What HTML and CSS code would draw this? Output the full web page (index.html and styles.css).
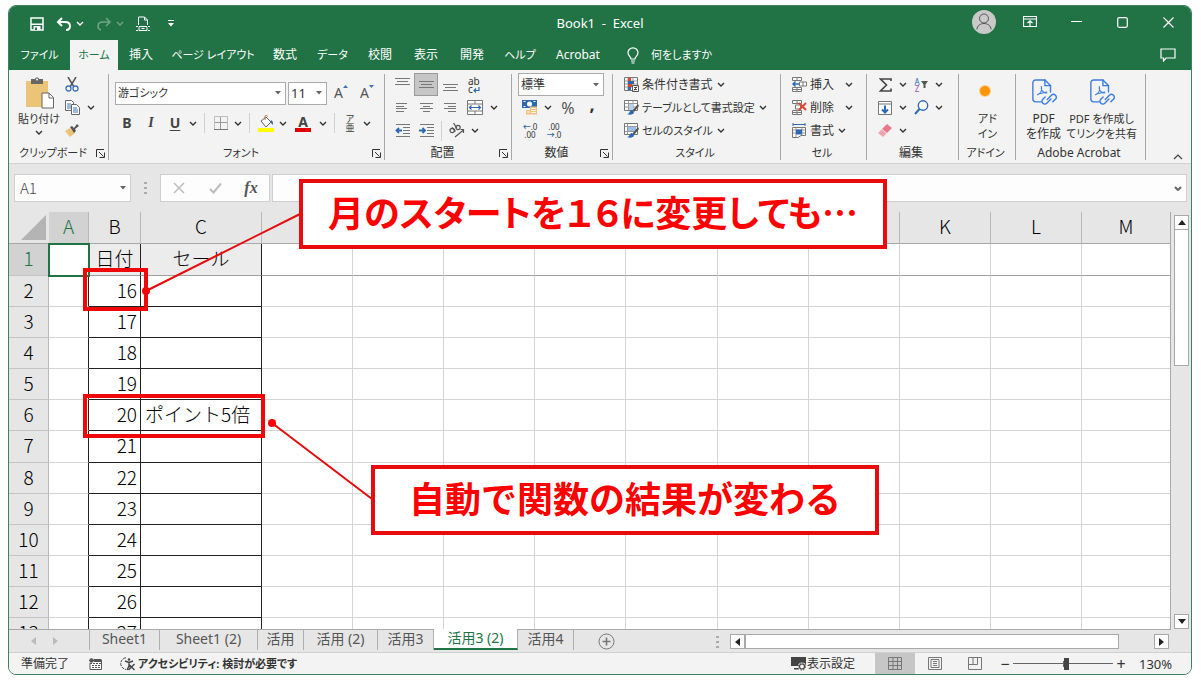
FILE: index.html
```html
<!DOCTYPE html>
<html lang="ja">
<head>
<meta charset="utf-8">
<title>Book1 - Excel</title>
<link rel="stylesheet" href="styles.css">
</head>
<body>
<svg class="defs" aria-hidden="true">
  <symbol id="chev" viewBox="0 0 8 5"><path d="M1 1l3 3 3-3" fill="none" stroke="currentColor" stroke-width="1.4"/></symbol>
  <symbol id="drop" viewBox="0 0 6 4"><path d="M0 0h6L3 3.5z" fill="currentColor"/></symbol>
  <symbol id="launch" viewBox="0 0 9 9"><path d="M.5 8V.5H8M3 3l4.5 4.500M8.500 3.500v5h-5" fill="none" stroke="currentColor"/></symbol>
  <symbol id="pdf" viewBox="0 0 28 30">
    <g fill="none" stroke="#3b7de0" stroke-width="1.5" stroke-linecap="round">
      <path d="M11 24.500H5a3 3 0 0 1-3-3V4a3 3 0 0 1 3-3h10l6 6v7"/><path d="M15 1v6h6"/>
      <path d="M7 17c4-2 5-6 4-9M11 10c1 4 3 5 6 5M8 16l9-2" stroke-width="1.200"/>
      <path d="M17.500 22l4.500-4.500a3 3 0 0 1 4.300 4.300L23.500 24.500"/><path d="M21.500 21.500L17 26a3 3 0 0 1-4.300-4.300l2.500-2.500"/>
    </g>
  </symbol>
</svg>

<div class="window">
  <header class="titlebar">
    <div class="quick">
      <button class="btn save" aria-label="上書き保存"><svg width="14" height="14" viewBox="0 0 14 14"><path d="M1 1h12v12H1z" fill="none" stroke="#fff" stroke-width="1.500"/><path d="M1 6.500h12v1.500H1zM3.500 9h7v4h-7z" fill="#fff"/><path d="M5 10.500h2V13H5z" fill="#217346"/></svg></button>
      <button class="btn" aria-label="元に戻す"><svg width="16" height="14" viewBox="0 0 16 14"><path d="M6 1L2 5l4 4M2 5h7c3 0 5 1.500 5 4s-1.500 4-4 4" fill="none" stroke="#fff" stroke-width="2"/></svg></button>
      <svg class="chev" width="8" height="5"><use href="#chev"/></svg>
      <button class="btn dim" aria-label="やり直し"><svg width="16" height="14" viewBox="0 0 16 14"><path d="M10 1l4 4-4 4M14 5H7C4 5 2 6.500 2 9s1 3.500 3 4" fill="none" stroke="#fff" stroke-width="1.500"/></svg></button>
      <svg class="chev dim" width="8" height="5"><use href="#chev"/></svg>
      <button class="btn" aria-label="印刷プレビュー"><svg width="14" height="16" viewBox="0 0 14 16"><path d="M2.500 9V1h6l3 3v5M8.500 1v3h3" fill="none" stroke="#fff"/><path d="M0 10.500h2M12 10.500h2M0 14.500h2M12 14.500h2M3 10.500h8v4H3zM5.500 12.500h3" fill="none" stroke="#fff"/></svg></button>
      <button class="btn custom" aria-label="カスタマイズ"><svg width="6" height="7" viewBox="0 0 6 7"><path d="M0 .5h6" stroke="#fff"/><path d="M0 3h6L3 6.500z" fill="#fff"/></svg></button>
    </div>
    <h1 class="doc-title">Book1  -  Excel</h1>
    <div class="win-buttons">
      <button class="btn" aria-label="アカウント"><svg width="24" height="24" viewBox="0 0 24 24"><circle cx="12" cy="12" r="12" fill="#c9c9c9"/><circle cx="12" cy="8.500" r="4.500" fill="none" stroke="#555"/><path d="M5 19.500c0-8 14-8 14 0" fill="none" stroke="#555"/></svg></button>
      <button class="btn" aria-label="リボンの表示オプション"><svg width="14" height="12" viewBox="0 0 14 12"><path d="M.5.5h13v10H.5zM.5 3h13M7 10V5M4.500 7L7 4.700 9.500 7" fill="none" stroke="#fff" stroke-width="1.200"/></svg></button>
      <button class="btn" aria-label="最小化"><svg width="11" height="11" viewBox="0 0 11 11"><path d="M0 4.500h11" stroke="#fff" stroke-width="1.200"/></svg></button>
      <button class="btn" aria-label="最大化"><svg width="11" height="11" viewBox="0 0 11 11"><rect x=".7" y=".7" width="9.600" height="9.600" rx="1.500" fill="none" stroke="#fff" stroke-width="1.200"/></svg></button>
      <button class="btn" aria-label="閉じる"><svg width="11" height="11" viewBox="0 0 11 11"><path d="M.5.5l10 10M10.500.5l-10 10" stroke="#fff" stroke-width="1.200"/></svg></button>
    </div>
  </header>

  <nav class="tabs">
    <a href="#" class="kana">ファイル</a><a href="#" class="active kana">ホーム</a><a href="#">挿入</a><a href="#" class="kana">ページ レイアウト</a><a href="#">数式</a><a href="#" class="kana">データ</a><a href="#">校閲</a><a href="#">表示</a><a href="#">開発</a><a href="#" class="kana">ヘルプ</a><a href="#">Acrobat</a>
    <a href="#" class="tell kana"><svg width="12" height="17" viewBox="0 0 12 17"><path d="M4 12C4 9.500 1 9 1 5.800a5 5 0 0 1 10 0C11 9 8 9.500 8 12zM4 14h4M4.500 16h3" fill="none" stroke="#fff" stroke-width="1.200"/></svg>何をしますか</a>
    <button class="btn comment" aria-label="コメント"><svg width="16" height="14" viewBox="0 0 16 14"><path d="M1 1h14v9H6l-2.500 3V10H1z" fill="none" stroke="#fff" stroke-width="1.200"/></svg></button>
  </nav>

  <div class="ribbon">
    <section class="group g-clip">
      <div class="group-body">
        <button class="btn big kana"><svg width="30" height="32" viewBox="0 0 30 32"><path d="M2 4h22v26H2z" fill="#ecc477"/><path d="M7 2h4c0-2 4-2 4 0h4v5H7z" fill="#666"/><circle cx="13" cy="2.500" r="1" fill="#fff"/><path d="M18 16h7l4.500 4.500V31H18z" fill="#fff" stroke="#666"/><path d="M25 16v5h4.500" fill="none" stroke="#666"/></svg><span>貼り付け</span><svg class="chev" width="8" height="5"><use href="#chev"/></svg></button>
        <div class="rows">
          <div class="row"><button class="btn c24" aria-label="切り取り"><svg width="14" height="15" viewBox="0 0 14 15"><path d="M3 0l6 10M11 0L5 10" stroke="#555" stroke-width="1.500"/><circle cx="3.500" cy="11.500" r="2.500" fill="none" stroke="#3f72b5" stroke-width="1.300"/><circle cx="10.500" cy="11.500" r="2.500" fill="none" stroke="#3f72b5" stroke-width="1.300"/></svg></button></div>
          <div class="row"><button class="btn c24" aria-label="コピー"><svg width="15" height="15" viewBox="0 0 15 15"><path d="M.5.5h6l2 2v8h-8z" fill="#fff" stroke="#666"/><path d="M2 4h4M2 6h4M2 8h4" stroke="#3f72b5"/><path d="M6.500 4.500h5l3 3v7h-8z" fill="#fff" stroke="#666"/><path d="M8 8h4M8 10h5M8 12h5" stroke="#3f72b5"/></svg></button><svg class="chev c14" width="8" height="5"><use href="#chev"/></svg></div>
          <div class="row"><button class="btn c24" aria-label="書式のコピー"><svg width="14" height="13" viewBox="0 0 14 13"><path d="M5 4l5 5-5 4-5-6z" fill="#ecc477"/><path d="M5 3l2-1 2 2 3-4 2 2-4 3 1 2-2 2z" fill="#555"/></svg></button></div>
        </div>
      </div>
      <div class="group-label kana"><span>クリップボード</span><button class="btn launch" aria-label="クリップボードの設定"><svg width="9" height="9"><use href="#launch"/></svg></button></div>
    </section>

    <section class="group g-font">
      <div class="group-body stack">
        <div class="frow">
          <label class="combo font-name kana"><select aria-label="フォント"><option>游ゴシック</option></select><svg width="6" height="4"><use href="#drop"/></svg></label>
          <label class="combo font-size"><select aria-label="フォント サイズ"><option>11</option></select><svg width="6" height="4"><use href="#drop"/></svg></label>
          <button class="btn c24 grow" aria-label="拡大">A<svg width="5" height="3" viewBox="0 0 5 3"><path d="M0 3l2.500-3L5 3z" fill="#3f72b5"/></svg></button>
          <button class="btn c24 grow" aria-label="縮小">A<svg width="5" height="3" viewBox="0 0 5 3"><path d="M0 0h5L2.500 3z" fill="#3f72b5"/></svg></button>
        </div>
        <div class="frow tight">
          <button class="btn c24 b">B</button><button class="btn c24 i">I</button><button class="btn c24 u">U</button><svg class="chev c12" width="8" height="5"><use href="#chev"/></svg>
          <i class="sep"></i>
          <button class="btn c22" aria-label="罫線"><svg width="14" height="14" viewBox="0 0 14 14"><path d="M.5.5h13v13H.5z" fill="none" stroke="#888" stroke-dasharray="1 1"/><path d="M6.500 1v12M1 6.500h12" stroke="#999"/><path d="M0 13.500h14" stroke="#777"/></svg></button><svg class="chev c12" width="8" height="5"><use href="#chev"/></svg>
          <i class="sep"></i>
          <button class="btn c22" aria-label="塗りつぶし"><svg width="17" height="17" viewBox="0 0 17 17"><path d="M3 6l5-4 5 5-5 5z" fill="#fff" stroke="#666"/><path d="M7 5V1.500c0-1.500 2.500-1.500 2.500 0" fill="none" stroke="#ba7040"/><path d="M13 5c2 1 2.500 3 1.500 5l-2-3z" fill="#2d69b3"/><path d="M0 13h16v4H0z" fill="#ffff00"/></svg></button><svg class="chev c12" width="8" height="5"><use href="#chev"/></svg>
          <button class="btn c28 fcolor" aria-label="フォントの色">A</button><svg class="chev c12" width="8" height="5"><use href="#chev"/></svg>
          <i class="sep"></i>
          <button class="btn c20 ruby"><span>ア</span><span>亜</span></button><svg class="chev c14" width="8" height="5"><use href="#chev"/></svg>
        </div>
      </div>
      <div class="group-label kana"><span>フォント</span><button class="btn launch" aria-label="フォントの設定"><svg width="9" height="9"><use href="#launch"/></svg></button></div>
    </section>

    <section class="group g-align">
      <div class="group-body">
        <div class="rows">
          <div class="row"><button class="btn c24" aria-label="上揃え"><svg width="15" height="15" viewBox="0 0 15 15"><path d="M0 1.500h15M2 4.500h11M0 7.500h15" stroke="#777"/></svg></button><button class="btn c24 on" aria-label="上下中央揃え"><svg width="15" height="9" viewBox="0 0 15 9"><path d="M0 1.500h15M2 4.500h11M0 7.500h15" stroke="#777"/></svg></button><button class="btn c24" aria-label="下揃え"><svg width="15" height="15" viewBox="0 0 15 15"><path d="M0 7.500h15M2 10.500h11M0 13.500h15" stroke="#777"/></svg></button><button class="btn c26 wrap"><span>ab</span><span>c<svg width="7" height="6" viewBox="0 0 7 6"><path d="M6 0v3.500H1M3 1.500l-2 2 2 2" fill="none" stroke="#2d69b3" stroke-width="1.200"/></svg></span></button></div>
          <div class="row"><button class="btn c24" aria-label="左揃え"><svg width="12" height="9" viewBox="0 0 12 9"><path d="M0 .5h11M0 3.500h8M0 5.500h11M0 8.500h8" stroke="#777"/></svg></button><button class="btn c24" aria-label="中央揃え"><svg width="13" height="9" viewBox="0 0 13 9"><path d="M0 .5h13M3 3.500h7M0 5.500h13M3 8.500h7" stroke="#777"/></svg></button><button class="btn c24" aria-label="右揃え"><svg width="12" height="9" viewBox="0 0 12 9"><path d="M0 .5h12M4 3.500h8M0 5.500h12M4 8.500h8" stroke="#777"/></svg></button><button class="btn c26" aria-label="セルを結合"><svg width="16" height="15" viewBox="0 0 16 15"><path d="M.5.5h15v14H.5z" fill="#fff" stroke="#777"/><path d="M1 4h14M1 11h14M8 1v3M8 11v3" stroke="#777"/><path d="M2 7.500h12M4.500 5.500l-2 2 2 2M11.500 5.500l2 2-2 2" fill="none" stroke="#2d69b3" stroke-width="1.200"/></svg></button><svg class="chev c12" width="8" height="5"><use href="#chev"/></svg></div>
          <div class="row"><button class="btn c24" aria-label="インデントを減らす"><svg width="15" height="13" viewBox="0 0 15 13"><path d="M1 .5h14M8 3.500h7M8 6.500h7M8 9.500h7M1 12.500h14" stroke="#777"/><path d="M7 6.500H1.500M4 4L1.500 6.500 4 9" fill="none" stroke="#2d69b3" stroke-width="1.800"/></svg></button><button class="btn c24" aria-label="インデントを増やす"><svg width="15" height="13" viewBox="0 0 15 13"><path d="M1 .5h14M8 3.500h7M8 6.500h7M8 9.500h7M1 12.500h14" stroke="#777"/><path d="M0 6.500h5.500M3.500 4L6 6.500 3.500 9" fill="none" stroke="#2d69b3" stroke-width="1.800"/></svg></button><i class="sep narrow"></i><button class="btn c24" aria-label="方向"><svg width="16" height="15" viewBox="0 0 16 15"><g fill="none" stroke="#555" stroke-width="1.200"><circle cx="3.200" cy="7.500" r="2.200"/><path d="M3 4.300l3.500 4.200"/><circle cx="9" cy="4.500" r="2.200"/><path d="M4.500 0l3.500 5.500M6 14l8.500-7M11.500 6.500h3V10"/></g></svg></button><svg class="chev c12" width="8" height="5"><use href="#chev"/></svg></div>
        </div>
      </div>
      <div class="group-label"><span>配置</span><button class="btn launch" aria-label="配置の設定"><svg width="9" height="9"><use href="#launch"/></svg></button></div>
    </section>

    <section class="group g-num">
      <div class="group-body">
        <div class="rows">
          <label class="combo format"><select aria-label="表示形式"><option>標準</option></select><svg width="6" height="4"><use href="#drop"/></svg></label>
          <div class="row"><button class="btn c24" aria-label="通貨"><svg width="16" height="15" viewBox="0 0 16 15"><path d="M0 0h15v8H0z" fill="#2d69b3"/><circle cx="7.500" cy="4" r="2.500" fill="#fff"/><path d="M1.500 1.500h2M11.500 1.500h2M1.500 6.500h2" stroke="#fff"/><path d="M8 6.500h7v8H8zM4 10h5v4.500H4z" fill="#f3c07c"/><path d="M9 8.500h5M9 10.500h5M9 12.500h5M5 12h3" stroke="#fff" stroke-width=".8"/></svg></button><svg class="chev c12" width="8" height="5"><use href="#chev"/></svg><button class="btn c28 pct">%</button><button class="btn c20 comma">,</button></div>
          <div class="row"><button class="btn c24 dec"><span><b>←</b>.0</span><span>.00</span></button><button class="btn c24 dec"><span>.00</span><span><b>→</b>.0</span></button></div>
        </div>
      </div>
      <div class="group-label"><span>数値</span><button class="btn launch" aria-label="数値の設定"><svg width="9" height="9"><use href="#launch"/></svg></button></div>
    </section>

    <section class="group g-style">
      <div class="group-body">
        <div class="rows">
          <button class="btn item"><svg width="15" height="15" viewBox="0 0 15 15"><path d="M.5.5h13v13H.5z" fill="#fff" stroke="#777"/><path d="M1 4h12M1 7h12M1 10h12M4 1v12M9 1v12" stroke="#999"/><path d="M4 1h3v3H4zM4 7h4v3H4z" fill="#d9482b"/><path d="M4 4h6v3H4zM4 10h3v3H4z" fill="#2d69b3"/><path d="M8.500 8.500h6v6h-6z" fill="#fff" stroke="#555"/><path d="M10 10.500h3M10 12.500h3M13 9.500l-3 4" stroke="#333" stroke-width=".8"/></svg>条件付き書式<svg class="chev" width="8" height="5"><use href="#chev"/></svg></button>
          <button class="btn item kana"><svg width="15" height="15" viewBox="0 0 15 15"><path d="M.5.5h13v10H.5z" fill="#fff" stroke="#777"/><path d="M1 3.500h12M1 7h12M4.500 1v9M9 1v9" stroke="#999"/><path d="M5 4h4v6H5z" fill="#b9d0ea"/><path d="M14 4L8.500 10.500l1.500 1.500 5-6z" fill="#555"/><path d="M8 10c-3 0-2 4-5 4 3 1.500 7 .5 7-2z" fill="#2d69b3"/></svg>テーブルとして書式設定<svg class="chev" width="8" height="5"><use href="#chev"/></svg></button>
          <button class="btn item kana"><svg width="15" height="15" viewBox="0 0 15 15"><path d="M.5.5h13v11H.5z" fill="#fff" stroke="#777"/><path d="M1 3.500h12M1 8.500h12M3.500 1v10" stroke="#999"/><path d="M4 4h8v4H4z" fill="#9bbfe6"/><path d="M14 4L8.500 10.500l1.500 1.500 5-6z" fill="#555"/><path d="M8 10c-3 0-2 4-5 4 3 1.500 7 .5 7-2z" fill="#2d69b3"/></svg>セルのスタイル<svg class="chev" width="8" height="5"><use href="#chev"/></svg></button>
        </div>
      </div>
      <div class="group-label kana"><span>スタイル</span></div>
    </section>

    <section class="group g-cell">
      <div class="group-body">
        <div class="rows">
          <button class="btn item wide"><svg width="15" height="15" viewBox="0 0 15 15"><path d="M.5.5h9v3h-9zM5 .5v3M.5 10.500h9v4h-9zM5 10.500v4M.5 12.500h9M7.500 5h7v4h-7zM11 5v4" fill="#fff" stroke="#777"/><path d="M7 7H1M3.500 4.500L1 7l2.500 2.500" fill="none" stroke="#2d69b3" stroke-width="1.500"/></svg><span>挿入</span><svg class="chev" width="8" height="5"><use href="#chev"/></svg></button>
          <button class="btn item wide"><svg width="15" height="15" viewBox="0 0 15 15"><path d="M.5.500h9v3h-9zM5 .5v3M.5 10.500h9v4h-9zM5 10.500v4M.5 12.500h9M3.500 5h5v4h-5z" fill="#fff" stroke="#777"/><path d="M7 3l7 7M14 3l-7 7" stroke="#e0482b" stroke-width="2"/></svg><span>削除</span><svg class="chev" width="8" height="5"><use href="#chev"/></svg></button>
          <button class="btn item"><svg width="15" height="15" viewBox="0 0 15 15"><path d="M1 1.500h12M1 0v3M13 0v3" stroke="#2d69b3"/><path d="M.5 4.500h13v8H9l-3 2H.5z" fill="#fff" stroke="#777"/><path d="M1 7h12M1 10h12M4 5v9M10 5v7" stroke="#999"/><path d="M4 6.500h6v5H4z" fill="#2d69b3"/></svg><span>書式</span><svg class="chev" width="8" height="5"><use href="#chev"/></svg></button>
        </div>
      </div>
      <div class="group-label kana"><span>セル</span></div>
    </section>

    <section class="group g-edit">
      <div class="group-body">
        <div class="rows">
          <div class="row"><button class="btn c24" aria-label="合計"><svg width="13" height="14" viewBox="0 0 13 14"><path d="M12 3V1H1.500l6 6-6 6H12v-2.500" fill="none" stroke="#444" stroke-width="1.600"/></svg></button><svg class="chev c12" width="8" height="5"><use href="#chev"/></svg><button class="btn c24 az"><span>A<em>Z</em></span><svg width="7" height="7" viewBox="0 0 7 7"><path d="M0 0h7L4.500 3.500V7h-2V3.500z" fill="#555"/></svg></button><svg class="chev c12" width="8" height="5"><use href="#chev"/></svg></div>
          <div class="row"><button class="btn c24" aria-label="フィル"><svg width="14" height="14" viewBox="0 0 14 14"><path d="M.5.500h13v13H.5zM.5 3h13" fill="#fff" stroke="#777"/><path d="M7 4.500v7M4 8.500l3 3 3-3" fill="none" stroke="#2d69b3" stroke-width="2"/></svg></button><svg class="chev c12" width="8" height="5"><use href="#chev"/></svg><button class="btn c24" aria-label="検索"><svg width="15" height="15" viewBox="0 0 15 15"><circle cx="9" cy="5.500" r="4.700" fill="#fff" stroke="#2d69b3" stroke-width="1.400"/><path d="M5.500 9L1 14" stroke="#2d69b3" stroke-width="2"/></svg></button><svg class="chev c12" width="8" height="5"><use href="#chev"/></svg></div>
          <div class="row"><button class="btn c24" aria-label="クリア"><svg width="14" height="13" viewBox="0 0 14 13"><path d="M9 0l5 4-5 5-5-4z" fill="#e8788a"/><path d="M3.500 5.500l5 4L5 13 0 9z" fill="#f0a3ae"/></svg></button><svg class="chev c12" width="8" height="5"><use href="#chev"/></svg></div>
        </div>
      </div>
      <div class="group-label"><span>編集</span></div>
    </section>

    <section class="group g-addin">
      <div class="group-body"><button class="btn big kana"><svg width="30" height="32" viewBox="0 0 30 32"><circle cx="12" cy="14" r="6" fill="#ffcf8a"/><circle cx="12" cy="14" r="5" fill="#ff9408"/></svg><span>アド<br>イン</span></button></div>
      <div class="group-label kana"><span>アドイン</span></div>
    </section>

    <section class="group g-acro">
      <div class="group-body">
        <button class="btn big"><svg width="26" height="32"><use href="#pdf"/></svg><span>PDF<br>を作成</span></button>
        <button class="btn big kana"><svg width="26" height="32"><use href="#pdf"/></svg><span>PDF を作成し<br>てリンクを共有</span></button>
      </div>
      <div class="group-label"><span>Adobe Acrobat</span></div>
    </section>
    <button class="btn collapse" aria-label="リボンを折りたたむ"><svg width="10" height="6" viewBox="0 0 10 6"><path d="M1 5l4-4 4 4" fill="none" stroke="#444" stroke-width="1.200"/></svg></button>
  </div>

  <div class="formula">
    <label class="namebox"><input value="A1" aria-label="名前ボックス"><svg width="6" height="4"><use href="#drop"/></svg></label>
    <svg class="dots" width="3" height="12" viewBox="0 0 3 12"><path d="M0 0h3v2H0zM0 5h3v2H0zM0 10h3v2H0z" fill="#aaa"/></svg>
    <div class="fx">
      <button class="btn" aria-label="キャンセル"><svg width="12" height="12" viewBox="0 0 12 12"><path d="M1 1l10 10M11 1L1 11" stroke="#bdbdbd" stroke-width="1.500"/></svg></button>
      <button class="btn" aria-label="入力"><svg width="13" height="12" viewBox="0 0 13 12"><path d="M1 7l3.500 3.500L12 1.500" fill="none" stroke="#bdbdbd" stroke-width="2"/></svg></button>
      <button class="btn fn">fx</button>
    </div>
    <label class="fbar"><input aria-label="数式バー"><svg width="8" height="5" viewBox="0 0 8 5"><path d="M1 1l3 3 3-3" fill="none" stroke="#666" stroke-width="2"/></svg></label>
  </div>

  <div class="sheet">
    <div class="cells">
      <table>
        <colgroup><col class="w-h"><col class="w-a"><col class="w-b"><col class="w-c"><col><col><col><col><col><col><col><col><col><col class="w-m"></colgroup>
        <thead><tr><th class="corner"><svg width="25" height="25" viewBox="0 0 25 25"><path d="M25 0v25H0z" fill="#b4b4b4"/></svg></th><th class="sel">A</th><th>B</th><th>C</th><th></th><th></th><th></th><th></th><th></th><th></th><th></th><th>K</th><th>L</th><th>M</th></tr></thead>
        <tbody>
          <tr class="frozen"><th class="sel">1</th><td class="selected"></td><td>日付</td><td>セール</td><td></td><td></td><td></td><td></td><td></td><td></td><td></td><td></td><td></td><td></td></tr>
          <tr><th>2</th><td></td><td>16</td><td></td><td></td><td></td><td></td><td></td><td></td><td></td><td></td><td></td><td></td><td></td></tr>
          <tr><th>3</th><td></td><td>17</td><td></td><td></td><td></td><td></td><td></td><td></td><td></td><td></td><td></td><td></td><td></td></tr>
          <tr><th>4</th><td></td><td>18</td><td></td><td></td><td></td><td></td><td></td><td></td><td></td><td></td><td></td><td></td><td></td></tr>
          <tr><th>5</th><td></td><td>19</td><td></td><td></td><td></td><td></td><td></td><td></td><td></td><td></td><td></td><td></td><td></td></tr>
          <tr><th>6</th><td></td><td>20</td><td>ポイント5倍</td><td></td><td></td><td></td><td></td><td></td><td></td><td></td><td></td><td></td><td></td></tr>
          <tr><th>7</th><td></td><td>21</td><td></td><td></td><td></td><td></td><td></td><td></td><td></td><td></td><td></td><td></td><td></td></tr>
          <tr><th>8</th><td></td><td>22</td><td></td><td></td><td></td><td></td><td></td><td></td><td></td><td></td><td></td><td></td><td></td></tr>
          <tr><th>9</th><td></td><td>23</td><td></td><td></td><td></td><td></td><td></td><td></td><td></td><td></td><td></td><td></td><td></td></tr>
          <tr><th>10</th><td></td><td>24</td><td></td><td></td><td></td><td></td><td></td><td></td><td></td><td></td><td></td><td></td><td></td></tr>
          <tr><th>11</th><td></td><td>25</td><td></td><td></td><td></td><td></td><td></td><td></td><td></td><td></td><td></td><td></td><td></td></tr>
          <tr><th>12</th><td></td><td>26</td><td></td><td></td><td></td><td></td><td></td><td></td><td></td><td></td><td></td><td></td><td></td></tr>
          <tr><th>13</th><td></td><td>27</td><td></td><td></td><td></td><td></td><td></td><td></td><td></td><td></td><td></td><td></td><td></td></tr>
        </tbody>
      </table>
    </div>
    <div class="vscroll">
      <button class="btn sbtn" aria-label="上へ"><svg width="8" height="5" viewBox="0 0 8 5"><path d="M0 5l4-5 4 5z" fill="#222"/></svg></button>
      <div class="vthumb"></div>
      <button class="btn sbtn end" aria-label="下へ"><svg width="8" height="5" viewBox="0 0 8 5"><path d="M0 0h8L4 5z" fill="#222"/></svg></button>
    </div>
  </div>

  <div class="sheetbar">
    <div class="arrows"><svg width="5" height="8" viewBox="0 0 5 8"><path d="M5 0v8L0 4z" fill="#bbb"/></svg><svg width="5" height="8" viewBox="0 0 5 8"><path d="M0 0v8l5-4z" fill="#bbb"/></svg></div>
    <nav class="sheets"><a href="#">Sheet1</a><a href="#">Sheet1 (2)</a><a href="#">活用</a><a href="#">活用 (2)</a><a href="#">活用3</a><a href="#" class="active">活用3 (2)</a><a href="#">活用4</a></nav>
    <button class="btn add" aria-label="新しいシート"><svg width="17" height="17" viewBox="0 0 17 17"><circle cx="8.500" cy="8.500" r="7.500" fill="none" stroke="#777"/><path d="M8.500 4.500v8M4.500 8.500h8" stroke="#777" stroke-width="1.600"/></svg></button>
    <svg class="dots" width="3" height="12" viewBox="0 0 3 12"><path d="M0 0h3v2H0zM0 5h3v2H0zM0 10h3v2H0z" fill="#aaa"/></svg>
    <div class="hscroll">
      <button class="btn sbtn" aria-label="左へ"><svg width="5" height="8" viewBox="0 0 5 8"><path d="M5 0v8L0 4z" fill="#222"/></svg></button>
      <div class="hthumb"></div>
      <button class="btn sbtn end" aria-label="右へ"><svg width="5" height="8" viewBox="0 0 5 8"><path d="M0 0v8l5-4z" fill="#222"/></svg></button>
    </div>
  </div>

  <footer class="status">
    <span class="ready">準備完了</span>
    <svg class="macro" width="13" height="12" viewBox="0 0 13 12"><path d="M2 2.500h10.500v9H1V5" fill="#fff" stroke="#555"/><path d="M1 5.500h11M3 7.500h8M3 9.500h8" stroke="#555" stroke-dasharray="2 1"/><path d="M5 1h7.500v3H5z" fill="#555"/><circle cx="2.500" cy="2.500" r="2.300" fill="#555"/></svg>
    <button class="btn access kana"><svg width="16" height="14" viewBox="0 0 16 14"><path d="M6 .7C-1 2-1 11 6 12.500" fill="none" stroke="#444" stroke-dasharray="3 1"/><path d="M5 4l4 1.500L13 4M9 5.500V9M7 13l2-4 2 1M8.500 7l6 6M14.500 7l-6 6" fill="none" stroke="#444" stroke-width="1.400"/><circle cx="9" cy="2.500" r="1.300" fill="#444"/></svg>アクセシビリティ: 検討が必要です</button>
    <button class="btn disp"><svg width="15" height="15" viewBox="0 0 15 15"><path d="M0 1h15v9H0zM3 12h5v1.500H3z" fill="#444"/><circle cx="11" cy="10.500" r="3" fill="#f3f3f3" stroke="#f3f3f3" stroke-width="2"/><circle cx="11" cy="10.500" r="2.500" fill="none" stroke="#444" stroke-width="1.200"/><circle cx="11" cy="10.500" r="3.600" fill="none" stroke="#444" stroke-dasharray="1.400 1.400"/></svg>表示設定</button>
    <div class="views">
      <button class="btn cur" aria-label="標準"><svg width="14" height="13" viewBox="0 0 14 13"><path d="M.5.500h13v12H.5zM.5 4.500h13M.5 8.500h13M5 .5v12M9.500.5v12" fill="none" stroke="#777"/></svg></button>
      <button class="btn" aria-label="ページ レイアウト"><svg width="14" height="13" viewBox="0 0 14 13"><path d="M.5.500h13v12H.5zM3 2.500h8v8H3zM5 4.500h4M5 6.500h4M5 8.500h4" fill="none" stroke="#777"/></svg></button>
      <button class="btn" aria-label="改ページ プレビュー"><svg width="14" height="13" viewBox="0 0 14 13"><path d="M.5.500h13v12H.5zM5 .5v7H.500M9.500.5v7H5" fill="none" stroke="#777"/></svg></button>
    </div>
    <button class="btn zbtn">−</button>
    <input class="zoom" type="range" min="0" max="100" value="54" aria-label="ズーム">
    <button class="btn zbtn">+</button>
    <span class="percent">130%</span>
  </footer>
</div>

<svg class="leaders" aria-hidden="true" width="1201" height="680" viewBox="0 0 1201 680">
  <g stroke="#e60a0a" stroke-width="2"><path d="M146 291l154-77M272 423l100 76"/></g>
  <circle cx="146" cy="291" r="4" fill="#f00"/><circle cx="272" cy="423" r="4" fill="#f00"/>
</svg>
<div class="mark mark-start"></div>
<div class="mark mark-result"></div>
<p class="callout callout-start">月のスタートを１６に変更しても…</p>
<p class="callout callout-result">自動で関数の結果が変わる</p>
</body>
</html>
```

FILE: styles.css
```css
* { box-sizing: border-box; }
body { margin: 0; background: #fff; color: #333; font: 12px/16px "Noto Sans", "Noto Sans CJK JP", sans-serif; font-feature-settings: "palt"; }
a { color: inherit; text-decoration: none; }
svg { flex: none; }
.defs { position: absolute; width: 0; height: 0; }
.btn { display: flex; align-items: center; justify-content: center; flex: none; margin: 0; padding: 0; border: 0; background: none; color: inherit; font: inherit; font-feature-settings: inherit; white-space: nowrap; }

.window { display: flex; flex-direction: column; height: calc(100vh - 10px); margin: 5px 9px 5px 8px; border: 1px solid #3f7f62; border-radius: 8px; overflow: hidden; background: #e6e6e6; }

.titlebar { display: grid; grid-template-columns: 1fr auto 1fr; height: 34px; flex: none; background: #217346; color: #fff; }
.quick { display: flex; align-items: center; gap: 12px; }
.save { margin-left: 21px; }
.quick .chev { margin-left: -8px; }
.dim { opacity: .35; }
.custom { margin-left: 6px; }
.doc-title { margin: 0; font-size: 13px; font-weight: 400; line-height: 35px; white-space: pre; }
.win-buttons { display: flex; justify-content: flex-end; }
.win-buttons .btn { width: 46px; height: 32px; }

.tabs { display: grid; grid-template-columns: 61px 48px 46px 98px 46px 49px 46px 46px 46px 50px 66px 1fr 46px; height: 30px; flex: none; background: #217346; color: #fff; line-height: 30px; text-align: center; white-space: nowrap; }
.tabs .active { background: #f3f3f3; color: #217346; }
.tell { display: flex; align-items: center; gap: 12px; padding-left: 16px; }

.ribbon { display: flex; height: 94px; flex: none; background: #f3f3f3; border-bottom: 1px solid #d2d2d2; }
.group { position: relative; display: flex; flex-direction: column; padding-top: 3px; }
.group::after { content: ""; position: absolute; right: 0; top: 4px; bottom: 3px; border-right: 1px solid #a8a8a8; }
.group-body { display: flex; height: 73px; }
.group-label { position: relative; text-align: center; line-height: 20px; padding-right: 12px; }
.launch { position: absolute; right: 4px; top: 6px; }
.rows { display: flex; flex-direction: column; }
.row { display: flex; align-items: center; height: 23px; }
.c12 { width: 12px; } .c14 { width: 14px; } .c20 { width: 20px; } .c22 { width: 22px; } .c24 { width: 24px; } .c26 { width: 26px; } .c28 { width: 28px; }
.sep { width: 1px; height: 20px; margin: 0 5px; background: #d0d0d0; }
.sep.narrow { margin: 0 3px; }
.big { flex-direction: column; justify-content: flex-start; line-height: 15px; padding-top: 4px; gap: 2px; }
.item { justify-content: flex-start; height: 23px; gap: 3px; }
.item .chev { margin-left: 1px; }
.item.wide .chev { margin-left: 8px; }

.g-clip { width: 100px; }
.g-clip .group-body { padding-left: 9px; }
.g-clip .big { width: 42px; }
.g-clip .big .chev { margin-top: 2px; }
.g-font { width: 276px; }
.g-align { width: 127px; }
.g-num { width: 101px; }
.g-style { width: 168px; }
.g-cell { width: 86px; }
.g-edit { width: 92px; }
.g-addin { width: 57px; }
.g-acro { width: 130px; }
.g-align .group-body { padding-left: 5px; }
.g-num .group-body { padding-left: 6px; }
.g-style .group-body, .g-cell .group-body { padding-left: 11px; }
.g-edit .group-body { padding-left: 6px; }
.g-addin .group-label, .g-acro .group-label, .g-style .group-label, .g-cell .group-label, .g-edit .group-label { padding-right: 4px; }
.g-addin .group-body { justify-content: center; }
.g-acro .group-body { padding-left: 10px; gap: 5px; }

.stack { flex-direction: column; gap: 6px; padding: 8px 0 0 6px; }
.frow { display: flex; align-items: center; height: 24px; gap: 2px; }
.frow.tight { gap: 0; }
.combo { display: grid; align-items: center; height: 23px; background: #fff; border: 1px solid #ababab; }
.combo select, .combo svg, .namebox input, .namebox svg, .fbar input, .fbar svg { grid-area: 1 / 1; }
.combo select { appearance: none; width: 100%; padding: 0 0 0 2px; border: 0; background: none; color: #333; font: inherit; font-feature-settings: inherit; }
.combo svg, .namebox svg, .fbar svg { justify-self: end; margin-right: 4px; color: #666; }
.font-name { width: 171px; }
.font-size { width: 39px; }
.format { width: 86px; }
.font-size select { font-size: 13px; }
.grow { font-size: 14px; align-items: center; color: #555; }
.grow svg { align-self: flex-start; }
.b, .i, .u, .fcolor { font-size: 14px; font-weight: 700; color: #444; }
.i { font-family: "Liberation Serif", serif; font-style: italic; }
.u { text-decoration: underline; text-underline-offset: 2px; }
.fcolor::after { content: ""; width: 16px; height: 4px; background: #e00000; }
.fcolor { flex-direction: column; line-height: 13px; }
.ruby { flex-direction: column; font-size: 9px; line-height: 9px; }
.on { height: 23px; background: #c6c6c6; border: 1px solid #9a9a9a; }
.wrap { flex-direction: column; font-size: 10px; line-height: 8px; }
.wrap span { width: 14px; text-align: left; }
.pct { font-size: 16px; color: #555; }
.comma { font-size: 18px; font-weight: 700; height: 23px; padding-bottom: 8px; }
.dec { flex-direction: column; font-size: 8px; line-height: 8px; align-items: center; }
.dec b { color: #2d69b3; }
.az { gap: 1px; }
.az span { font-size: 8px; line-height: 7px; width: 6px; color: #2d69b3; }
.az em { display: block; font-style: normal; color: #9a4fb0; }
.collapse { margin: auto 8px 3px auto; }

.formula { display: flex; align-items: center; height: 48px; flex: none; padding: 0 4px 0 5px; }
.namebox, .fbar, .fx { display: grid; align-items: center; height: 28px; background: #fdfdfd; border: 1px solid #cfcfcf; }
.namebox { width: 117px; }
.namebox input, .fbar input { width: 100%; min-width: 0; padding: 0 5px; border: 0; background: none; color: #444; font: 300 15px/20px "Noto Sans CJK JP", sans-serif; }
.formula .dots { margin: 0 13px; }
.fx { grid-template-columns: 1fr 1fr 1fr; width: 110px; }
.fn { font: italic 700 16px/20px "Liberation Serif", serif; color: #555; }
.fbar { flex: 1; margin-left: 2px; }

.sheet { display: flex; flex: 1; min-height: 0; }
.cells { flex: 1; min-width: 0; overflow: hidden; border-right: 1px solid #a8a8a8; border-bottom: 1px solid #a8a8a8; }
table { width: 100%; table-layout: fixed; border-collapse: separate; border-spacing: 0; font: 300 19px/26px "Noto Sans CJK JP", sans-serif; font-feature-settings: normal; color: #000; }
.w-h { width: 40px; } .w-a { width: 40px; } .w-b { width: 52px; } .w-c { width: 121px; } .w-m { width: 88px; }
th, td { height: 31px; padding: 0 0 3px; font-weight: 300; white-space: nowrap; overflow: hidden; }
td { background: #fff; border-right: 1px solid #d4d4d4; border-bottom: 1px solid #d4d4d4; }
tr:nth-child(6n+1) > * { height: 32px; }
th { background: #e6e6e6; border-right: 1px solid #b8b8b8; border-bottom: 1px solid #c4c4c4; }
thead th { border-bottom-color: #a8a8a8; }
th:last-child, td:last-child { border-right: 0; }
th.sel { background: #d2d2d2; color: #217346; }
th.corner { text-align: right; vertical-align: bottom; border-right-color: #e6e6e6; line-height: 0; padding: 0 2px 3px 0; }
td:nth-child(2), td:nth-child(3), td:nth-child(4) { border-right-color: #222; }
td:nth-child(3), td:nth-child(4) { border-bottom-color: #222; }
td:nth-child(3) { text-align: right; padding-right: 3px; }
td:nth-child(4) { padding-left: 4px; }
.frozen td { border-bottom-color: #a0a0a0; }
.frozen td:nth-child(3), .frozen td:nth-child(4) { padding: 0 0 3px; text-align: center; background: #ececec; border-bottom-color: #a0a0a0; }
td.selected { outline: 2px solid #217346; outline-offset: -1px; }

.vscroll { display: flex; flex-direction: column; width: 20px; padding: 3px 2px 1px 3px; }
.sbtn { width: 15px; height: 15px; background: #fff; border: 1px solid #a8a8a8; }
.vthumb { height: 33%; margin-top: -1px; background: #fff; border: 1px solid #a8a8a8; }
.vscroll .end { margin-top: auto; }

.sheetbar { display: flex; height: 23px; flex: none; color: #555; font-size: 14px; border-bottom: 1px solid #d0d0d0; }
.arrows { display: flex; align-items: center; gap: 17px; width: 80px; padding-left: 22px; }
.sheets { display: grid; grid-template-columns: 70px 98px 46px 74px 56px 84px 56px; height: 20px; line-height: 18px; text-align: center; white-space: nowrap; border-left: 1px solid #b0b0b0; }
.sheets a { border-right: 1px solid #b0b0b0; }
.sheets .active { margin-top: -1px; background: #fff; color: #217346; border-bottom: 2px solid #217346; }
.add { margin-left: 24px; }
.sheetbar > .dots { margin: 6px 11px 0 auto; }
.hscroll { display: flex; width: 439px; margin: 4px 22px 0 0; }
.hthumb { flex: 1; max-width: 374px; height: 15px; background: #fff; border: 1px solid #a8a8a8; }
.hscroll .end { margin-left: auto; }

.status { display: flex; align-items: center; height: 21px; flex: none; background: #f3f3f3; padding-left: 12px; }
.macro { margin: 0 18px 0 20px; }
.access { gap: 2px; font-weight: 700; }
.disp { gap: 1px; margin-left: auto; }
.views { display: flex; align-self: stretch; margin: 0 2px 0 20px; }
.views .btn { width: 40px; }
.cur { background: #c6c6c6; }
.zbtn { width: 16px; font-size: 16px; }
.zoom { appearance: none; width: 100px; height: 12px; margin: 0; background: linear-gradient(#666, #666) center / 100% 1px no-repeat, linear-gradient(#666, #666) 50% 50% / 1px 6px no-repeat; }
.zoom::-webkit-slider-thumb { appearance: none; width: 5px; height: 12px; background: #444; }
.percent { width: 35px; margin: 0 17px 0 10px; font-size: 13px; }

.kana { font-size: 11px; }

.leaders { position: absolute; left: 0; top: 0; pointer-events: none; }
.mark { position: absolute; border: 4px solid #f00808; }
.mark-start { left: 83px; top: 268px; width: 65px; height: 43px; }
.mark-result { left: 83px; top: 394px; width: 182px; height: 44px; }
.callout { position: absolute; margin: 0; padding-bottom: 6px; border: 4px solid #e80c0c; background: #fff; color: #f00; font: 700 36px/56px "Noto Sans CJK JP", sans-serif; text-align: center; white-space: nowrap; }
.callout-start { left: 299px; top: 179px; width: 588px; font-feature-settings: "palt"; }
.callout-result { left: 371px; top: 465px; width: 508px; font-feature-settings: normal; }
```
